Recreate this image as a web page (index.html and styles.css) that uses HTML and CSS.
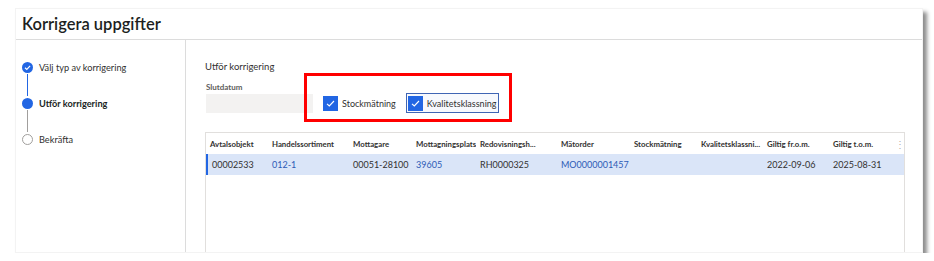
FILE: index.html
```html
<!DOCTYPE html>
<html lang="sv">
<head>
    <meta charset="UTF-8">
    <title>Korrigera uppgifter</title>
    <link rel="stylesheet" href="styles.css">
</head>
<body>

    <!-- Dialog window -->
    <div class="dialog">
        <div class="dialog-header">
            <h1 class="dialog-title">Korrigera uppgifter</h1>
        </div>

        <div class="dialog-body">

            <!-- Wizard steps -->
            <nav class="steps">
                <div class="step done">
                    <span class="step-icon">
                        <svg width="11" height="11" viewBox="0 0 11 11"><circle cx="5.5" cy="5.5" r="5.5" fill="#2266e3"/><path d="M3 5.7 L4.8 7.4 L8.1 3.9" fill="none" stroke="#fff" stroke-width="1.2"/></svg>
                    </span>
                    <span class="step-label">Välj typ av korrigering</span>
                </div>
                <div class="step-line active"></div>
                <div class="step current">
                    <span class="step-icon"><span class="dot"></span></span>
                    <span class="step-label">Utför korrigering</span>
                </div>
                <div class="step-line"></div>
                <div class="step">
                    <span class="step-icon"><span class="ring"></span></span>
                    <span class="step-label">Bekräfta</span>
                </div>
            </nav>

            <!-- Step content -->
            <main class="content">
                <div class="section-title">Utför korrigering</div>

                <div class="field-row">
                    <div class="field">
                        <label class="field-label">Slutdatum</label>
                        <div class="field-input"></div>
                    </div>
                    <div class="checks">
                        <label class="check">
                            <span class="check-box"><svg width="15" height="15" viewBox="0 0 15 15"><path d="M4 7.8 L6.3 10 L11 5" fill="none" stroke="#fff" stroke-width="1.1"/></svg></span>
                            Stockmätning
                        </label>
                        <label class="check focused">
                            <span class="check-box"><svg width="15" height="15" viewBox="0 0 15 15"><path d="M4 7.8 L6.3 10 L11 5" fill="none" stroke="#fff" stroke-width="1.1"/></svg></span>
                            Kvalitetsklassning
                        </label>
                    </div>
                    <!-- annotation frame -->
                    <div class="highlight"></div>
                </div>

                <div class="grid">
                    <div class="grid-row grid-head">
                        <div class="cell">Avtalsobjekt</div>
                        <div class="cell">Handelssortiment</div>
                        <div class="cell">Mottagare</div>
                        <div class="cell">Mottagningsplats</div>
                        <div class="cell">Redovisningsh...</div>
                        <div class="cell">Mätorder</div>
                        <div class="cell">Stockmätning</div>
                        <div class="cell">Kvalitetsklassni...</div>
                        <div class="cell">Giltig fr.o.m.</div>
                        <div class="cell">Giltig t.o.m.</div>
                        <div class="cell more">⋮</div>
                    </div>
                    <div class="grid-row selected">
                        <div class="cell">00002533</div>
                        <div class="cell link">012-1</div>
                        <div class="cell">00051-28100</div>
                        <div class="cell link">39605</div>
                        <div class="cell">RH0000325</div>
                        <div class="cell link">MO0000001457</div>
                        <div class="cell"></div>
                        <div class="cell"></div>
                        <div class="cell">2022-09-06</div>
                        <div class="cell">2025-08-31</div>
                        <div class="cell more"></div>
                    </div>
                </div>
            </main>
        </div>
    </div>

</body>
</html>
```

FILE: styles.css
```css
/* General */
body {
    margin: 0;
    background: #fff;
    font-family: 'Lato', 'Noto Sans', sans-serif;
    color: #323130;
}

/* Dialog window */
.dialog {
    margin: 8px 0 0 15px;
    width: 908px;
    height: 245px;
    background: #fff;
    border: 1px solid #f3f3f3;
    box-sizing: border-box;
    box-shadow: 4px 4px 4px rgba(0, 0, 0, 0.45);
    display: flex;
    flex-direction: column;
    overflow: hidden;
}

.dialog-header {
    height: 30px;
    border-bottom: 1px solid #dcdcdc;
    display: flex;
    align-items: center;
    padding-left: 6px;
    flex-shrink: 0;
}

.dialog-title {
    margin: 0;
    font-size: 16.5px;
    font-weight: 600;
    color: #201f1e;
}

.dialog-body {
    flex: 1;
    display: flex;
    min-height: 0;
}

/* Wizard steps */
.steps {
    width: 170px;
    border-right: 1px solid #dcdcdc;
    padding: 20px 0 0 5px;
    box-sizing: border-box;
    flex-shrink: 0;
}

.step {
    height: 14px;
    display: flex;
    align-items: center;
    font-size: 9.2px;
    color: #323130;
}

.step-icon {
    width: 12px;
    height: 12px;
    display: flex;
    align-items: center;
    justify-content: center;
    margin-right: 6px;
}

.step.current .step-label {
    font-weight: 700;
    color: #201f1e;
}

.dot {
    width: 11px;
    height: 11px;
    border-radius: 50%;
    background: #2266e3;
}

.ring {
    width: 9px;
    height: 9px;
    border-radius: 50%;
    border: 1px solid #a19f9d;
}

.step-line {
    width: 1.5px;
    height: 22px;
    margin-left: 5.5px;
    background: #a19f9d;
}

.step-line.active {
    background: #2266e3;
}

/* Step content */
.content {
    flex: 1;
    padding: 20px 16px 0 19px;
    display: flex;
    flex-direction: column;
    min-width: 0;
}

.section-title {
    font-size: 9.5px;
    color: #323130;
    height: 14px;
    line-height: 14px;
}

.field-row {
    position: relative;
    display: flex;
    align-items: flex-end;
    height: 41px;
}

.field {
    display: flex;
    flex-direction: column;
    margin-left: 1px;
}

.field-label {
    font-size: 8px;
    font-weight: 700;
    color: #605e5c;
    height: 12px;
    line-height: 10px;
}

.field-input {
    width: 107px;
    height: 19px;
    background: #f3f2f1;
    margin-bottom: 2px;
}

.checks {
    display: flex;
    align-items: center;
    margin-left: 8px;
    margin-bottom: 2px;
    gap: 8px;
}

.check {
    display: flex;
    align-items: center;
    font-size: 9px;
    color: #323130;
    height: 18px;
    padding: 0 1px;
    border: 1px solid transparent;
    gap: 4px;
}

.check.focused {
    border-color: #3f65b4;
    background: #f7f9fd;
}

.check-box {
    width: 15px;
    height: 15px;
    background: #2266e3;
    display: flex;
}

/* annotation frame drawn over the fields */
.highlight {
    position: absolute;
    left: 99px;
    top: -1px;
    width: 202px;
    height: 43px;
    border: 3px solid #f00;
}

/* Grid */
.grid {
    margin-top: 17px;
    flex: 1;
    border: 1px solid #e1dfdd;
    border-bottom: none;
    width: 700px;
    box-sizing: border-box;
}

.grid-row {
    display: grid;
    grid-template-columns: 62px 81px 63px 64px 81px 73px 67px 66px 66px 66px 1fr;
    height: 21px;
    align-items: center;
}

.grid-head .cell {
    font-size: 7.8px;
    font-weight: 700;
    color: #323130;
}

.grid-row.selected {
    height: 21px;
    background: #dae5f8;
    box-shadow: inset 2px 0 0 #2266e3;
}

.cell {
    padding-left: 4px;
    font-size: 9px;
    white-space: nowrap;
    overflow: hidden;
}

.selected .cell:first-child {
    padding-left: 6px;
}

.cell.link {
    color: #2d5bb6;
}

.grid-head .cell.more {
    padding: 0;
    text-align: center;
    font-size: 10px;
    font-weight: 400;
    color: #b3b0ad;
    overflow: visible;
}
```
